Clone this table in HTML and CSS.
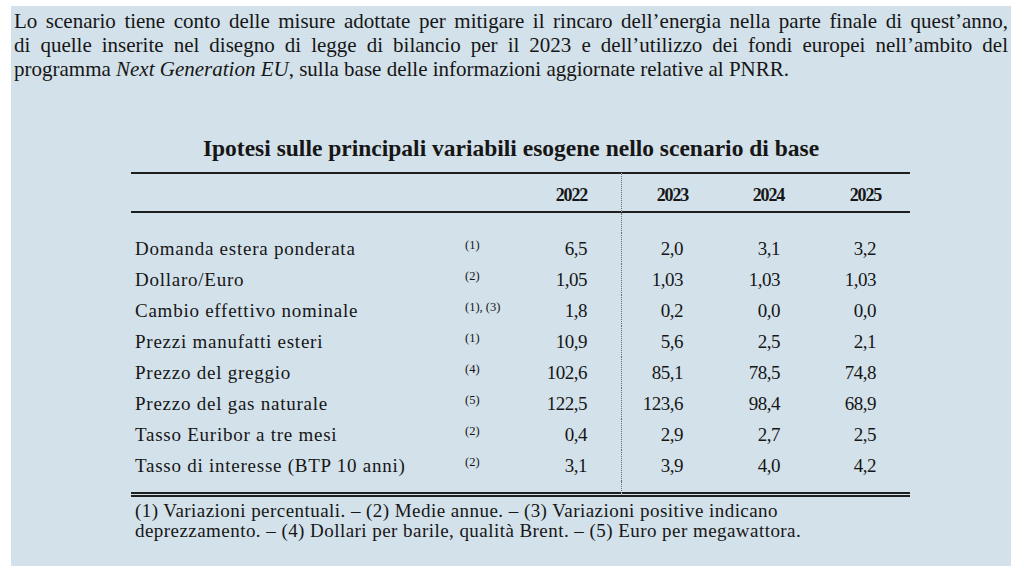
FILE: index.html
```html
<!DOCTYPE html>
<html lang="it">
<head>
<meta charset="utf-8">
<title>Ipotesi sulle principali variabili esogene</title>
<link rel="stylesheet" href="styles.css">
</head>
<body>
<div class="page">
  <div class="intro">
    <span class="jl">Lo scenario tiene conto delle misure adottate per mitigare il rincaro dell’energia nella parte finale di quest’anno,</span>
    <span class="jl">di quelle inserite nel disegno di legge di bilancio per il 2023 e dell’utilizzo dei fondi europei nell’ambito del</span>
    <span class="ll">programma <em>Next Generation EU</em>, sulla base delle informazioni aggiornate relative al PNRR.</span>
  </div>
  <h1 class="title">Ipotesi sulle principali variabili esogene nello scenario di base</h1>
  <table class="data">
    <colgroup>
      <col class="c-label"><col class="c-note"><col class="c-y1"><col class="c-y2"><col class="c-y3"><col class="c-y4">
    </colgroup>
    <thead>
      <tr>
        <th class="lbl"></th><th class="note"></th>
        <th class="y y1">2022</th><th class="y y2 split">2023</th><th class="y y3">2024</th><th class="y y4">2025</th>
      </tr>
    </thead>
    <tbody>
      <tr class="sp top"><td></td><td></td><td></td><td class="split"></td><td></td><td></td></tr>
      <tr><td class="lbl">Domanda estera ponderata</td><td class="note"><span>(1)</span></td><td class="v v1">6,5</td><td class="v v2 split">2,0</td><td class="v v3">3,1</td><td class="v v4">3,2</td></tr>
      <tr><td class="lbl">Dollaro/Euro</td><td class="note"><span>(2)</span></td><td class="v v1">1,05</td><td class="v v2 split">1,03</td><td class="v v3">1,03</td><td class="v v4">1,03</td></tr>
      <tr><td class="lbl">Cambio effettivo nominale</td><td class="note"><span>(1), (3)</span></td><td class="v v1">1,8</td><td class="v v2 split">0,2</td><td class="v v3">0,0</td><td class="v v4">0,0</td></tr>
      <tr><td class="lbl">Prezzi manufatti esteri</td><td class="note"><span>(1)</span></td><td class="v v1">10,9</td><td class="v v2 split">5,6</td><td class="v v3">2,5</td><td class="v v4">2,1</td></tr>
      <tr><td class="lbl">Prezzo del greggio</td><td class="note"><span>(4)</span></td><td class="v v1">102,6</td><td class="v v2 split">85,1</td><td class="v v3">78,5</td><td class="v v4">74,8</td></tr>
      <tr><td class="lbl">Prezzo del gas naturale</td><td class="note"><span>(5)</span></td><td class="v v1">122,5</td><td class="v v2 split">123,6</td><td class="v v3">98,4</td><td class="v v4">68,9</td></tr>
      <tr><td class="lbl">Tasso Euribor a tre mesi</td><td class="note"><span>(2)</span></td><td class="v v1">0,4</td><td class="v v2 split">2,9</td><td class="v v3">2,7</td><td class="v v4">2,5</td></tr>
      <tr><td class="lbl">Tasso di interesse (BTP 10 anni)</td><td class="note"><span>(2)</span></td><td class="v v1">3,1</td><td class="v v2 split">3,9</td><td class="v v3">4,0</td><td class="v v4">4,2</td></tr>
      <tr class="sp bottom"><td></td><td></td><td></td><td class="split"></td><td></td><td></td></tr>
    </tbody>
  </table>
  <p class="notes">(1) Variazioni percentuali. – (2) Medie annue. – (3) Variazioni positive indicano<br>deprezzamento. – (4) Dollari per barile, qualità Brent. – (5) Euro per megawattora.</p>
</div>
</body>
</html>
```
FILE: styles.css
```css
html, body {
  margin: 0;
  padding: 0;
  background: #ffffff;
}

body {
  font-family: "Liberation Serif", "Times New Roman", serif;
  color: #161616;
}

.page {
  box-sizing: border-box;
  width: 1000px;
  height: 560px;
  margin: 6px 0 0 11px;
  padding: 3px 3px 0 3px;
  background: #d3e1ea;
}

.intro {
  font-size: 21px;
  line-height: 24px;
}

.intro span {
  display: block;
  text-align: justify;
  text-align-last: justify;
}

.intro .ll {
  text-align-last: left;
}

.intro em {
  font-style: italic;
}

.title {
  margin: 53px 0 0 0;
  font-size: 23.5px;
  line-height: 28px;
  font-weight: bold;
  text-align: center;
}

.data {
  margin: 10px 0 0 117px;
  border-collapse: separate;
  border-spacing: 0;
  table-layout: fixed;
  width: 779px;
}

.c-label { width: 334px; }
.c-note { width: 75px; }
.c-y1 { width: 81px; }
.c-y2 { width: 96px; }
.c-y3 { width: 96px; }
.c-y4 { width: 97px; }

.data th,
.data td {
  padding: 0;
}

.data thead th {
  border-top: 2px solid #1e1e1e;
  border-bottom: 2px solid #1e1e1e;
  font-size: 18px;
  line-height: 20px;
  font-weight: bold;
  padding-top: 11px;
  padding-bottom: 6px;
  letter-spacing: -1.2px;
}

.data th.y { text-align: right; }
.data th.y1 { padding-right: 34px; }
.data th.y2 { padding-right: 29px; }
.data th.y3 { padding-right: 29px; }
.data th.y4 { padding-right: 29px; }

.split {
  border-left: 1px dotted #6b6b6b;
}

.data tbody td {
  font-size: 19px;
  line-height: 31px;
  white-space: nowrap;
}

.data td.lbl {
  padding-left: 4px;
  letter-spacing: 0.75px;
}

.data td.note span {
  font-size: 12.5px;
  vertical-align: 6px;
  line-height: 1;
}

.data td.v {
  text-align: right;
  letter-spacing: -0.5px;
}

.data td.v1 { padding-right: 34px; }
.data td.v2 { padding-right: 34px; }
.data td.v3 { padding-right: 33px; }
.data td.v4 { padding-right: 34px; }

.data tr.sp td {
  font-size: 0;
  line-height: 0;
}

.data tr.sp.top td { height: 20px; }

.data tr.sp.bottom td {
  height: 11px;
  border-bottom: 5px double #1e1e1e;
}

.notes {
  margin: 4px 0 0 121px;
  font-size: 19px;
  line-height: 19.5px;
  letter-spacing: 0.45px;
}
```
